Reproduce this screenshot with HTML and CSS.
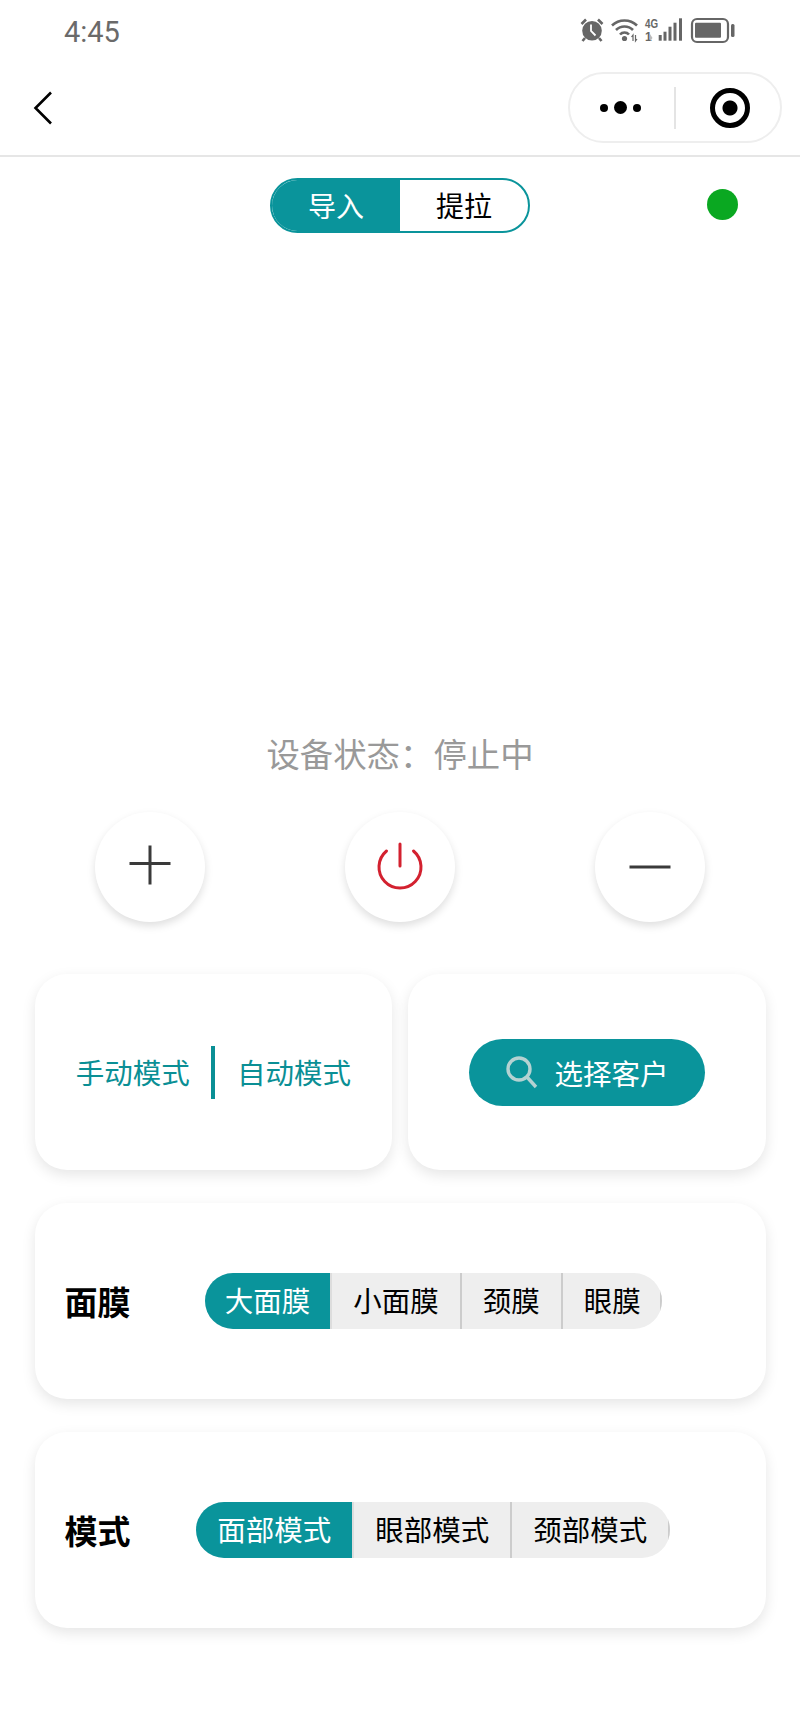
FILE: index.html
```html
<!DOCTYPE html>
<html lang="zh-CN">
<head>
    <meta charset="UTF-8">
    <meta name="viewport" content="width=device-width, initial-scale=1.0">
    <title>设备控制</title>
    <link rel="stylesheet" href="styles.css">
</head>
<body>
    <div class="status-bar">
        <span class="time">4:45</span>
        <svg class="status-icons" width="158" height="30" viewBox="0 0 158 30">
            <!-- alarm -->
            <circle cx="12" cy="14.7" r="9.800" fill="#666"/>
            <path d="M11 8.500v6.500l4.500 4.500" fill="none" stroke="#fff" stroke-width="1.800"/>
            <path d="M1.500 8 6 3.500M22.500 8 18 3.500" fill="none" stroke="#666" stroke-width="2.600"/>
            <path d="M5 22l-2.500 3M19 22l2.500 3" fill="none" stroke="#666" stroke-width="2.600"/>
            <!-- wifi -->
            <g fill="none" stroke="#666" stroke-width="2.600">
                <path d="M32 9.500a18 18 0 0 1 25 0"/>
                <path d="M36 14a12 12 0 0 1 17 0"/>
                <path d="M40 18.500a6 6 0 0 1 9 0"/>
            </g>
            <circle cx="44.500" cy="22.500" r="2.600" fill="#666"/>
            <path d="M53 25v-6l-1.500 2M55.500 19v6l1.500-2" fill="none" stroke="#666" stroke-width="1.200"/>
            <!-- mobile signal -->
            <text class="net" x="65" y="12" textLength="13" lengthAdjust="spacingAndGlyphs">4G</text>
            <text class="net" x="65" y="25">1</text>
            <path d="M70 25v-7l2.500 4z" fill="#bbb"/>
            <g fill="#666">
                <rect x="78.700" y="19" width="3" height="5.700"/>
                <rect x="83.500" y="15.700" width="3" height="9"/>
                <rect x="88.500" y="10.700" width="3" height="14"/>
                <rect x="93.500" y="6.700" width="3" height="18"/>
                <rect x="99" y="2.300" width="3" height="22.400"/>
            </g>
            <!-- battery -->
            <rect x="112" y="3" width="36" height="23" rx="5" fill="none" stroke="#666" stroke-width="2.200"/>
            <rect x="115" y="6.700" width="26" height="15" rx="1" fill="#666"/>
            <rect x="151" y="8" width="3.500" height="13" rx="1.500" fill="#666"/>
        </svg>
    </div>

    <div class="nav-bar">
        <svg class="back" width="20" height="34" viewBox="0 0 20 34">
            <path d="M18 1.500 2.500 17 18 32.500" fill="none" stroke="#000" stroke-width="2.600"/>
        </svg>
        <div class="capsule">
            <div class="capsule-btn">
                <i class="dot"></i><i class="dot dot-big"></i><i class="dot"></i>
            </div>
            <div class="capsule-line"></div>
            <div class="capsule-btn capsule-btn-target">
                <i class="target"></i>
            </div>
        </div>
    </div>

    <div class="type-row">
        <div class="type-switch">
            <div class="type-item active">导入</div>
            <div class="type-item">提拉</div>
        </div>
        <div class="online"></div>
    </div>

    <div class="device-state">设备状态：停止中</div>

    <div class="round-row">
        <div class="round-btn">
            <svg class="icon-plus" width="44" height="42" viewBox="0 0 44 42">
                <path d="M22 1.500v39M1.500 19.500h41" fill="none" stroke="#3a3a3a" stroke-width="3"/>
            </svg>
        </div>
        <div class="round-btn">
            <svg width="48" height="50" viewBox="0 0 48 50">
                <path d="M10.500 9A21 21 0 1 0 37.500 9" fill="none" stroke="#d3212f" stroke-width="3" stroke-linecap="round"/>
                <path d="M24 2v22" fill="none" stroke="#d3212f" stroke-width="3" stroke-linecap="round"/>
            </svg>
        </div>
        <div class="round-btn">
            <svg width="44" height="6" viewBox="0 0 44 6">
                <path d="M1.500 3h41" fill="none" stroke="#3a3a3a" stroke-width="3"/>
            </svg>
        </div>
    </div>

    <div class="card-row">
        <div class="card card-half">
            <span class="mode-text">手动模式</span>
            <i class="mode-line"></i>
            <span class="mode-text">自动模式</span>
        </div>
        <div class="card card-half">
            <div class="pick-btn">
                <svg width="32" height="33" viewBox="0 0 32 33">
                    <circle cx="13" cy="13" r="11" fill="none" stroke="#b4d2d2" stroke-width="3.400"/>
                    <path d="M21 21l9 10" fill="none" stroke="#b4d2d2" stroke-width="3.400"/>
                </svg>
                <span>选择客户</span>
            </div>
        </div>
    </div>

    <div class="card card-option">
        <div class="option-title">面膜</div>
        <div class="option-body">
            <div class="segment segment-short">
                <div class="segment-item active">大面膜</div>
                <div class="segment-item">小面膜</div>
                <div class="segment-item">颈膜</div>
                <div class="segment-item">眼膜</div>
            </div>
        </div>
    </div>

    <div class="card card-option">
        <div class="option-title">模式</div>
        <div class="option-body">
            <div class="segment">
                <div class="segment-item active">面部模式</div>
                <div class="segment-item">眼部模式</div>
                <div class="segment-item">颈部模式</div>
            </div>
        </div>
    </div>
</body>
</html>
```

FILE: styles.css
```css
* {
    margin: 0;
    padding: 0;
    box-sizing: border-box;
}
body {
    width: 800px;
    min-height: 1733px;
    background: #fff;
    color: #000;
    font-family: "Noto Sans CJK SC", "Noto Sans", sans-serif;
}
i {
    display: block;
}

/* status bar */
.status-bar {
    height: 60px;
    padding: 17px 62px 13px 64px;
    display: flex;
    justify-content: space-between;
    align-items: center;
}
.status-icons {
    margin-top: -2px;
}
.time {
    font-family: Roboto, sans-serif;
    font-size: 29px;
    line-height: 30px;
    color: #6a6a6a;
}
.net {
    font-family: "Liberation Sans", sans-serif;
    font-size: 12px;
    font-weight: bold;
    fill: #666;
}

/* nav */
.nav-bar {
    height: 97px;
    padding: 13px 18px 13px 33px;
    border-bottom: 2px solid #e6e6e6;
    display: flex;
    justify-content: space-between;
    align-items: center;
}
.capsule {
    width: 214px;
    height: 71px;
    border: 2px solid #eee;
    border-radius: 36px;
    display: flex;
    align-items: center;
}
.capsule-btn {
    flex: 1;
    display: flex;
    justify-content: center;
    align-items: center;
    gap: 6px;
    padding-right: 4px;
}
.capsule-btn-target {
    padding: 0 0 0 4px;
}
.capsule-line {
    width: 2px;
    height: 42px;
    background: #e4e4e4;
}
.dot {
    width: 8px;
    height: 8px;
    border-radius: 50%;
    background: #000;
}
.dot-big {
    width: 13px;
    height: 13px;
}
.target {
    width: 40px;
    height: 40px;
    border: 5px solid #000;
    border-radius: 50%;
    background: radial-gradient(circle, #000 0, #000 7px, #fff 8px);
}

/* import / lift */
.type-row {
    margin-top: 21px;
    display: grid;
    grid-template-columns: 1fr auto 1fr;
    align-items: center;
}
.type-switch {
    grid-column: 2;
    width: 260px;
    height: 55px;
    border: 2px solid #0a949b;
    border-radius: 28px;
    overflow: hidden;
    display: flex;
}
.type-item {
    flex: 1;
    font-size: 28px;
    line-height: 50px;
    text-align: center;
}
.type-item.active {
    background: #0a949b;
    color: #fff;
}
.online {
    grid-column: 3;
    justify-self: end;
    margin: -3px 62px 0 0;
    width: 31px;
    height: 31px;
    border-radius: 50%;
    background: #0aa821;
}

.device-state {
    margin-top: 500px;
    font-size: 33.400px;
    line-height: 40px;
    color: #999;
    text-align: center;
}

/* + power - */
.round-row {
    margin-top: 39px;
    padding: 0 95px;
    display: flex;
    justify-content: space-between;
}
.round-btn {
    width: 110px;
    height: 110px;
    border-radius: 50%;
    background: #fff;
    box-shadow: 0 4px 9px rgba(0, 0, 0, .13);
    display: flex;
    justify-content: center;
    align-items: center;
}
.icon-plus {
    margin-bottom: 4px;
}

/* cards */
.card {
    border-radius: 32px;
    background: #fff;
    box-shadow: 0 5px 14px rgba(0, 0, 0, .1);
    height: 196px;
}
.card-row {
    margin: 52px 34px 0 34.500px;
    display: flex;
    gap: 16px;
}
.card-half {
    flex: 1;
    display: flex;
    justify-content: center;
    align-items: center;
}
.mode-text {
    font-size: 28.500px;
    line-height: 40px;
    color: #0a8f95;
}
.mode-line {
    width: 4px;
    height: 53px;
    margin: 0 22px 0 21px;
    background: #0a8f95;
}
.pick-btn {
    width: 236px;
    height: 67px;
    border-radius: 34px;
    background: #0a949b;
    color: #fff;
    font-size: 28.500px;
    display: flex;
    justify-content: center;
    align-items: center;
    gap: 17px;
}
.card-option {
    margin: 33px 34px 0 34.500px;
    padding: 0 64px 0 30px;
    display: flex;
    align-items: center;
}
.option-title {
    width: 100px;
    font-size: 33px;
    font-weight: bold;
}
.option-body {
    flex: 1;
    display: flex;
    justify-content: center;
}
.segment {
    height: 56px;
    border-radius: 28px;
    overflow: hidden;
    background: #eee;
    display: flex;
}
.segment-item {
    padding: 0 21px;
    border-right: 2px solid #ccc;
    font-size: 28.500px;
    line-height: 54px;
    white-space: nowrap;
}
.segment-item.active {
    background: #0a949b;
    color: #fff;
    border-right-color: #ddd;
}
.segment-short .segment-item:first-child {
    padding: 0 20px;
}
.segment-short .segment-item:last-child {
    padding-right: 19px;
}
```
